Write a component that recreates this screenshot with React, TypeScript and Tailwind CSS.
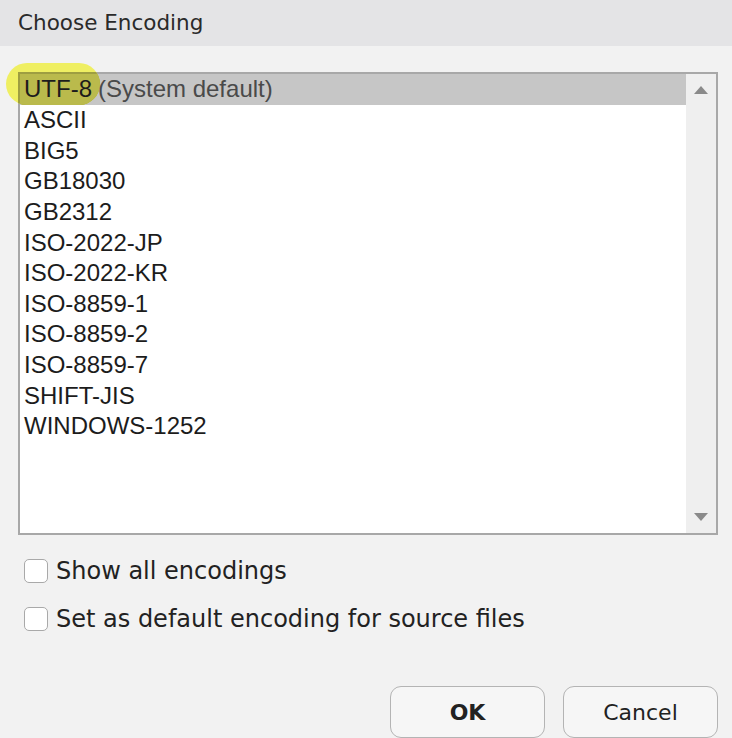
import React, { useState } from 'react';

const encodings = [
  'UTF-8',
  'ASCII',
  'BIG5',
  'GB18030',
  'GB2312',
  'ISO-2022-JP',
  'ISO-2022-KR',
  'ISO-8859-1',
  'ISO-8859-2',
  'ISO-8859-7',
  'SHIFT-JIS',
  'WINDOWS-1252',
];

const uiFont = { fontFamily: '"DejaVu Sans", "Liberation Sans", sans-serif' };
const listFont = { fontFamily: '"Liberation Sans", Arial, sans-serif' };

const Checkbox: React.FC<{ label: string }> = ({ label }) => {
  const [checked, setChecked] = useState(false);
  return (
    <label className="flex items-center gap-[8px] h-[24px] cursor-default" onClick={() => setChecked(!checked)}>
      <span className="w-[24px] h-[24px] rounded-[5px] border border-[#a9a9a9] bg-white shrink-0 flex items-center justify-center text-[16px] text-[#333]">
        {checked ? '✓' : ''}
      </span>
      <span className="text-[24px] leading-[24px] text-[#222]" style={uiFont}>
        {label}
      </span>
    </label>
  );
};

export default function App() {
  const [selected, setSelected] = useState(0);

  return (
    <div className="w-[732px] h-[738px] bg-[#f2f2f2] overflow-hidden flex flex-col">
      {/* Title bar */}
      <div className="h-[46px] bg-[#e4e4e6] flex items-center px-[18px] shrink-0">
        <span className="text-[21.5px] text-[#2a2a2a]" style={uiFont}>
          Choose Encoding
        </span>
      </div>

      {/* Encoding list */}
      <div className="relative mt-[26px] ml-[18px] w-[700px] h-[466px] border-2 border-[#a8a8a8] bg-white flex">
        <div className="flex-1 flex flex-col" style={listFont}>
          {encodings.map((enc, i) => (
            <div
              key={enc}
              onClick={() => setSelected(i)}
              className={`h-[30.65px] flex items-center pl-[4px] text-[24px] text-[#1c1c1c] ${
                selected === i ? 'bg-[#c6c6c6]' : ''
              }`}
            >
              <span className="relative z-[3]">{enc}</span>
              {i === 0 && <span className="relative z-[3] ml-[6px] text-[#4a4a4a]">(System default)</span>}
            </div>
          ))}
        </div>
        {/* Scrollbar */}
        <div className="w-[30px] bg-[#efefef] flex flex-col items-center justify-between py-[12px]">
          <svg width="14" height="8" viewBox="0 0 14 8">
            <polygon points="7,0 14,8 0,8" fill="#8a8a8a" />
          </svg>
          <svg width="14" height="8" viewBox="0 0 14 8">
            <polygon points="0,0 14,0 7,8" fill="#8a8a8a" />
          </svg>
        </div>
        {/* Highlight annotation (marker over the first row) */}
        <div className="absolute z-[2] left-[-14px] top-[-11px] w-[94px] h-[42px] rounded-[21px] overflow-hidden bg-[#efef62] pointer-events-none">
          <div className="absolute left-[12px] top-[9px] right-0 bottom-0 bg-[#9e9e41]" />
          <div className="absolute left-[14px] top-[11px] right-0 bottom-0 bg-[#baba4c]" />
        </div>
      </div>

      {/* Options */}
      <div className="mt-[24px] ml-[24px] flex flex-col gap-[24px]">
        <Checkbox label="Show all encodings" />
        <Checkbox label="Set as default encoding for source files" />
      </div>

      {/* Buttons */}
      <div className="mt-[55px] mr-[14px] flex justify-end gap-[18px]">
        <button
          className="w-[155px] h-[52px] rounded-[11px] border border-[#b4b4b4] bg-[#f6f6f6] text-[22px] font-bold text-[#222]"
          style={uiFont}
        >
          OK
        </button>
        <button
          className="w-[155px] h-[52px] rounded-[11px] border border-[#b4b4b4] bg-[#f6f6f6] text-[22px] text-[#222]"
          style={uiFont}
        >
          Cancel
        </button>
      </div>
    </div>
  );
}
